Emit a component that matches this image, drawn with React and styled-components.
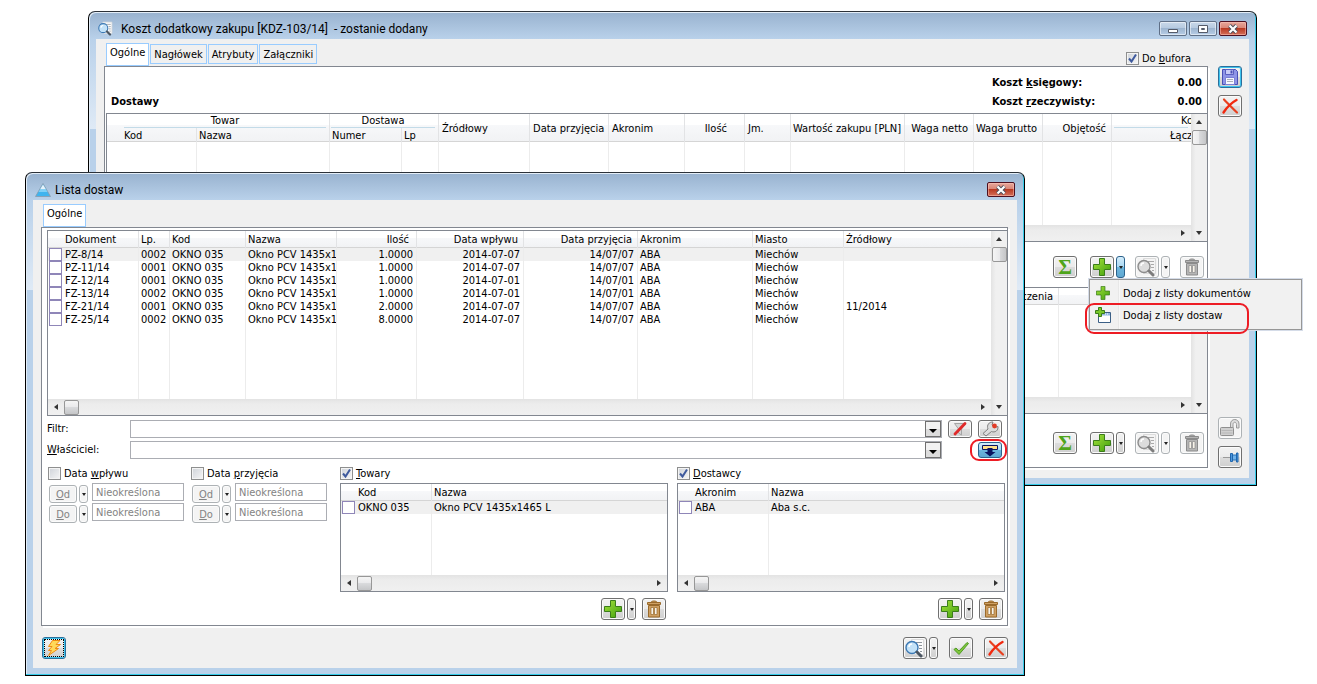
import React from 'react';
import styled, { createGlobalStyle, css } from 'styled-components';

const GlobalStyle = createGlobalStyle`
  * {
    box-sizing: border-box;
  }
  body {
    margin: 0;
    background: #fff;
    color: #000;
    font-family: "DejaVu Sans Condensed", "DejaVu Sans", sans-serif;
    font-size: 11px;
    line-height: 13px;
  }
  button, input, select {
    font: inherit;
    color: inherit;
    margin: 0;
    padding: 0;
  }
`;

const Desktop = styled.main`
  position: relative;
  min-height: 100vh;
`;

/* ---------- window frame ---------- */

const Frame = styled.section`
  position: absolute;
  top: ${p => p.$top}px;
  left: ${p => p.$left}px;
  right: ${p => p.$right}px;
  padding: 0 7px 7px;
  border: 1px solid #000;
  border-top-color: #2b3138;
  border-radius: 7px 7px 0 0;
  background: linear-gradient(#98b2cf 0, #b9d1ea 27px, #dfeaf6 117px, #b9d1ea 117px);
  box-shadow: inset -1px -1px 0 #35cbe8, inset 1px 1px 0 #e3edf7;
`;

const TitleBar = styled.header`
  display: flex;
  align-items: flex-end;
  gap: 2px;
  height: 27px;
  padding: 0 2px 3px;
`;

const Title = styled.h1`
  flex: 1;
  margin: 0;
  padding-left: ${p => p.$indent}px;
  font-family: Roboto, "Open Sans", sans-serif;
  font-size: 12px;
  font-weight: 400;
  line-height: 14px;
  white-space: pre;
`;

const CaptionButton = styled.button`
  display: flex;
  align-items: center;
  justify-content: center;
  width: 28px;
  height: 15px;
  border: 1px solid #5f6f86;
  border-radius: 2px;
  background: linear-gradient(#c9d8e9 0, #b5c9df 50%, #9db5d0 50%, #b7cde6 100%);
  box-shadow: inset 0 0 0 1px rgba(255, 255, 255, 0.5);
  ${p => p.$close && css`
    border-color: #4d1020;
    background: linear-gradient(#e6a79b 0, #d98374 50%, #b93a23 50%, #d4705a 100%);
    box-shadow: inset 0 0 0 1px rgba(255, 200, 190, 0.5);
  `}
`;

const Client = styled.div`
  padding: ${p => p.$pad};
  background: #f0f0f0;
`;

const ClientColumns = styled(Client)`
  display: grid;
  grid-template-columns: minmax(0, 1fr) 24px;
  column-gap: 10px;
`;

/* ---------- tabs and panels ---------- */

const TabRow = styled.nav`
  display: flex;
  align-items: center;
  gap: 1px;
  height: 24px;
  padding: 0 17px 0 2px;
`;

const Tab = styled.button`
  height: ${p => (p.$active ? 23 : 20)}px;
  padding: ${p => (p.$active ? '0 3px 4px' : '0 3px')};
  border: 1px solid #99ccff;
  background: ${p => (p.$active ? '#fff' : '#f0f0f0')};
`;

const Panel = styled.div`
  border: 1px solid #828790;
  background: #fff;
  box-shadow: 2px 2px 0 #fff;
`;

const Summary = styled.div`
  display: flex;
  align-items: flex-end;
  justify-content: space-between;
  padding: 6px 5px 2px 6px;
  font-weight: 700;
  line-height: 19px;
`;

const Heading = styled.h2`
  margin: 0;
  font-size: 11px;
`;

const Totals = styled.dl`
  display: grid;
  grid-template-columns: 1fr auto;
  width: 210px;
  margin: 0;
  dd {
    margin: 0;
  }
`;

/* ---------- buttons ---------- */

const ToolBar = styled.div`
  display: flex;
  justify-content: flex-end;
  gap: ${p => p.$gap}px;
  padding: ${p => p.$pad};
`;

const Split = styled.div`
  position: relative;
  display: flex;
  gap: 2px;
`;

const Tool = styled.button`
  display: flex;
  align-items: center;
  justify-content: center;
  flex: none;
  width: 24px;
  height: ${p => p.$height || 22}px;
  border: 1px solid #707070;
  border-radius: 3px;
  background: linear-gradient(#f2f2f2 0, #ebebeb 50%, #dddddd 50%, #cfcfcf 100%);
  box-shadow: inset 0 0 0 1px #fbfbfb;
  ${p => p.$focus && css`
    border-color: #2c6f9b;
    box-shadow: inset 0 0 0 1px #3cc3ee;
  `}
  ${p => p.$pressed && css`
    border-color: #2c628b;
    background: linear-gradient(#d4edfb 0, #a9d8f3 50%, #6db6dd 50%, #5fa8d2 100%);
    box-shadow: none;
  `}
  &:disabled {
    border-color: #adb2b5;
    background: #f4f4f4;
  }
`;

const SumTool = styled(Tool)`
  margin-right: 3px;
  color: #4fa51b;
  font: 700 21px/20px "Liberation Serif", serif;
`;

const Drop = styled(Tool)`
  width: 9px;
  &::after {
    content: '';
    border: 2px solid transparent;
    border-top: 3px solid #222;
    border-bottom: 0;
  }
`;

const TextTool = styled(Tool)`
  width: 28px;
  height: 18px;
  &:disabled {
    color: #838383;
  }
`;

const SmallDrop = styled(Drop)`
  height: 18px;
`;

const SideBar = styled.aside`
  display: flex;
  flex-direction: column;
  gap: 7px;
  padding-top: 24px;
`;

const Spacer = styled.div`
  flex: 1;
`;

/* ---------- menu ---------- */

const Menu = styled.div`
  position: absolute;
  z-index: 2;
  top: 23px;
  left: -1px;
  width: 213px;
  padding: 2px 1px 3px;
  border: 1px solid #979797;
  background: linear-gradient(90deg, transparent 28px, #e0e0e0 28px, #fff 30px, transparent 30px), #f1f1f1;
  box-shadow: 0 0 0 1px #d5dce8;
`;

const MenuItem = styled.button`
  display: grid;
  grid-template-columns: 24px 1fr;
  align-items: center;
  column-gap: 8px;
  width: 100%;
  height: 22px;
  border: 0;
  background: none;
  text-align: left;
  svg {
    justify-self: center;
  }
`;

const Marker = styled.span`
  position: absolute;
  z-index: 3;
  top: ${p => p.$top}px;
  left: ${p => p.$left}px;
  width: ${p => p.$width}px;
  height: ${p => p.$height}px;
  border: 2px solid #ed1c24;
  border-radius: 9px;
  pointer-events: none;
`;

/* ---------- lists ---------- */

const ListBox = styled.div`
  display: grid;
  grid-template-columns: minmax(0, 1fr) auto;
  margin: ${p => p.$margin || 0};
  border: 1px solid #828790;
  border-right-width: ${p => (p.$flush ? 0 : 1)}px;
  background: #fff;
`;

const Table = styled.table`
  width: 100%;
  height: ${p => p.$height}px;
  table-layout: fixed;
  border-collapse: separate;
  border-spacing: 0;
  thead {
    background:
      linear-gradient(to top, #d5d5d5 1px, transparent 1px),
      linear-gradient(#fff 0, #fff 40%, #f7f8fa 40%, #f1f2f4 100%);
  }
`;

const Th = styled.th`
  height: ${p => p.$height || 17}px;
  padding: 0 ${p => p.$right || 7}px 0 ${p => p.$left || 2}px;
  border-right: 1px solid #e2e3e5;
  font-weight: 400;
  text-align: ${p => p.$align || 'left'};
  white-space: nowrap;
  overflow: hidden;
  &:last-child {
    border-right: 0;
  }
`;

const GroupTh = styled(Th)`
  padding: 0 3px 0 ${p => p.$left || 1}px;
  div {
    height: 14px;
    padding-left: ${p => p.$indent || 0}px;
    border-bottom: 1px solid #c3dbe8;
  }
`;

const Td = styled.td`
  height: 13px;
  padding: 0 3px 0 2px;
  border-right: 1px solid #ececec;
  text-align: ${p => p.$align || 'left'};
  white-space: nowrap;
  overflow: hidden;
  &:last-child {
    border-right: 0;
  }
`;

const Row = styled.tr`
  background: ${p => (p.$current ? '#f0f0f0' : 'transparent')};
`;

const Filler = styled(Td)`
  height: auto;
`;

const CheckCell = styled(Td)`
  padding: 0 0 0 1px;
  label {
    display: flex;
    gap: 3px;
  }
`;

const RowCheck = styled.input`
  appearance: none;
  flex: none;
  width: 13px;
  height: 13px;
  border: 1px solid #8f86b8;
  background: #fff;
`;

const VScroll = styled.div`
  display: flex;
  flex-direction: column;
  align-items: center;
  grid-row: span 2;
  width: 16px;
  background: linear-gradient(90deg, #e3e3e3, #f0f0f0 30%);
`;

const HScroll = styled.div`
  display: flex;
  align-items: center;
  height: 16px;
  background: linear-gradient(#e3e3e3, #ececec 30%, #f0f0f0);
`;

const ScrollArrow = styled.button`
  display: flex;
  align-items: center;
  justify-content: center;
  width: 16px;
  height: 16px;
  border: 0;
  background: none;
`;

const Thumb = styled.div`
  width: 15px;
  height: 15px;
  border: 1px solid #979797;
  border-radius: 2px;
  background: linear-gradient(${p => p.$angle || 180}deg, #f5f5f5 0, #e9e9eb 50%, #d9dadc 50%, #c5c6c8 100%);
`;

/* ---------- form ---------- */

const FilterGrid = styled.div`
  display: grid;
  grid-template-columns: 77px 1fr 24px 24px;
  gap: 3px 6px;
  align-items: center;
  padding: 4px 5px 0;
  label {
    line-height: 16px;
  }
`;

const Combo = styled.div`
  display: grid;
  height: 18px;
  border: 1px solid #abadb3;
  select, span {
    grid-area: 1 / 1;
  }
  select {
    appearance: none;
    width: 100%;
    height: 16px;
    padding-left: 3px;
    border: 0;
    background: #fff;
  }
`;

const ComboArrow = styled.span`
  display: flex;
  align-items: flex-end;
  justify-content: center;
  justify-self: end;
  width: 16px;
  height: 16px;
  padding-bottom: 3px;
  border: 1px solid #707070;
  background: linear-gradient(#f2f2f2 50%, #dcdcdc 50%);
  pointer-events: none;
`;

const MarkedTool = styled.div`
  position: relative;
  grid-column: 4;
`;

const Criteria = styled.div`
  display: grid;
  grid-template-columns: 134px 140px minmax(0, 1fr) minmax(0, 1fr);
  column-gap: 9px;
  padding: 6px 2px 5px 6px;
`;

const Field = styled.label`
  display: flex;
  align-items: center;
  align-self: ${p => p.$align || 'auto'};
  gap: 3px;
  height: 16px;
  margin-bottom: ${p => p.$below || 0}px;
  margin-left: ${p => (p.$push ? 'auto' : 0)};
`;

const Box = styled.span`
  display: grid;
  width: 13px;
  height: 13px;
  input, svg {
    grid-area: 1 / 1;
  }
  input {
    appearance: none;
    width: 13px;
    height: 13px;
    border: 1px solid #8e8f8f;
    background: linear-gradient(135deg, #cfd3d9, #f6f6f6);
    box-shadow: inset 0 0 0 1px #f4f4f4;
  }
  svg {
    visibility: hidden;
    pointer-events: none;
  }
  input:checked + svg {
    visibility: visible;
  }
`;

const Dates = styled.div`
  display: flex;
  gap: 4px;
  padding-left: 1px;
`;

const DateButtons = styled.div`
  display: grid;
  gap: 2px;
  padding-top: 2px;
`;

const DateInputs = styled.div`
  display: grid;
  align-content: start;
  gap: 2px;
`;

const DateInput = styled.input`
  width: 92px;
  height: 18px;
  padding: 0 3px;
  border: 1px solid #abadb3;
  background: #fff;
  &:disabled {
    color: #838383;
  }
`;

const Footer = styled.footer`
  display: flex;
  gap: 11px;
  padding: 11px 0 0 1px;
`;

const DottedFocus = styled.span`
  display: flex;
  align-items: center;
  justify-content: center;
  width: 20px;
  height: 18px;
  border: 1px dotted #000;
`;

/* ---------- icons ---------- */

const PlusIcon = ({ size = 18 }) => (
  <svg width={size} height={size} viewBox="0 0 18 18">
    <defs>
      <linearGradient id="leaf" x1="0" y1="0" x2="1" y2="1">
        <stop offset="0" stopColor="#a5e23c" />
        <stop offset="1" stopColor="#3f9f0c" />
      </linearGradient>
    </defs>
    <path d="M6.5.5h5v6h6v5h-6v6h-5v-6h-6v-5h6z" fill="url(#leaf)" stroke="#3b7d1a" />
  </svg>
);

const LensIcon = ({ muted, size = 20 }) => (
  <svg width={size} height={size} viewBox="0 0 20 20">
    <path d="M6.500 1.500h12v15h-12z" fill={muted ? '#f4f4f4' : '#fdfdfd'} stroke="#dcdcdc" />
    <path d="M11 4.500h6M14 7.500h3M14 10.500h3M15 13.500h2" stroke={muted ? '#aaa' : '#8d949b'} />
    <circle cx="7" cy="9.500" r="6" fill={muted ? '#dcdcdc' : '#c3e2f8'} stroke={muted ? '#8c8c8c' : '#3c79b4'} strokeWidth="1.400" />
    <path d="M4 9a3 3 0 0 1 3-3" fill="none" stroke="#fff" strokeWidth="1.400" />
    <path d="M12 14l4 4" stroke={muted ? '#7d7d7d' : '#4c5763'} strokeWidth="3" strokeLinecap="round" />
  </svg>
);

const TrashIcon = ({ muted }) => {
  const dark = muted ? '#8b8b8b' : '#9a6a2b';
  const body = muted ? '#b5b5b5' : '#cfa063';
  return (
    <svg width="18" height="18" viewBox="0 0 18 18">
      <path d="M6 2.500c0-2 6-2 6 0" fill={body} stroke={dark} />
      <path d="M2.500 2.500h13v2h-13z" fill={body} stroke={dark} />
      <path d="M3.500 5.500h11v11.500h-11z" fill={body} stroke={dark} />
      <path d="M6 7.500h2.500v7H6zM9.500 7.500H12v7H9.500z" fill="#f7f3ea" stroke={dark} strokeWidth=".7" />
    </svg>
  );
};

const CrossIcon = () => (
  <svg width="18" height="18" viewBox="0 0 18 18">
    <path d="M3 2.500c4 4 8 8.500 13 13" stroke="#e8401f" strokeWidth="2.200" strokeLinecap="round" fill="none" />
    <path d="M15.500 3C10 6 6 10 2.500 15.500" stroke="#f1290f" strokeWidth="2.400" strokeLinecap="round" fill="none" />
  </svg>
);

const TickIcon = () => (
  <svg width="18" height="18" viewBox="0 0 18 18">
    <path d="M2 10.500l2-1.500 3 3L15 3.500l1.500 1L7 15.500z" fill="#7fc63b" stroke="#4f9a26" strokeLinejoin="round" />
  </svg>
);

const DiskIcon = () => (
  <svg width="18" height="18" viewBox="0 0 18 18">
    <path d="M1.500 1.500h13l2 2v13h-15z" fill="#8f94e6" stroke="#4a4fb5" />
    <path d="M4.500 1.500h8v5h-8z" fill="#c9cbf7" stroke="#5a5fc0" />
    <path d="M9.500 2.500h2v3h-2z" fill="#4a4fb5" />
    <path d="M4.500 9.500h9v7h-9z" fill="#f6f7ff" stroke="#7b80d6" />
    <path d="M6 11.500h6M6 13.500h6" stroke="#a9adb8" />
  </svg>
);

const LockIcon = () => (
  <svg width="22" height="20" viewBox="0 0 22 20">
    <path d="M11.500 10V6c0-6 8.500-6 8.500 0v4h-2.500V6.500c0-3-3.500-3-3.500 0V10z" fill="#dedede" stroke="#999" />
    <rect x="1.500" y="9.500" width="13" height="8" rx="1" fill="#cfcfcf" stroke="#8f8f8f" />
    <path d="M2.500 12.500h11M2.500 15h11" stroke="#b7b7b7" />
  </svg>
);

const PinIcon = () => (
  <svg width="20" height="16" viewBox="0 0 20 16">
    <path d="M3 8.500h8" stroke="#9a9a9a" />
    <path d="M12.500 6h4v5h-4z" fill="#6fb2ea" stroke="#2a72b8" />
    <path d="M10.500 4.500h2v8h-2z" fill="#4d97dd" stroke="#1f66ae" />
    <path d="M16.500 4h1.500v9h-1.500z" fill="#4d97dd" stroke="#1f66ae" />
  </svg>
);

const BoltIcon = () => (
  <svg width="16" height="16" viewBox="0 0 16 16">
    <path d="M6.500.5L14 .5 10 4.500 14.500 4.500 9 8.500 12.500 8.500 2.500 15.500 5.500 10.500 2.500 10.500 6 6.500 2.500 6.500z" fill="#ffd95a" stroke="#f08a10" strokeLinejoin="round" />
  </svg>
);

const NoFilterIcon = () => (
  <svg width="18" height="16" viewBox="0 0 18 16">
    <path d="M3.500 2.500h11L10.500 8v6l-3-2V8z" fill="#d6d6d6" stroke="#a5a5a5" />
    <path d="M14 2.500L4 13" stroke="#e02a2a" strokeWidth="2.800" strokeLinecap="round" />
  </svg>
);

const WrenchIcon = () => (
  <svg width="18" height="16" viewBox="0 0 18 16">
    <path d="M2 12.500L7 8C5.500 4 8 .8 12 1L11 4l2.500 2.500 3.500-1C17.500 9.500 14 12 10.500 10.500L5 15z" fill="#dcdcdc" stroke="#7f7f7f" strokeLinejoin="round" />
    <circle cx="13.500" cy="5" r="2.400" fill="#e23b26" />
  </svg>
);

const ApplyIcon = () => (
  <svg width="18" height="14" viewBox="0 0 18 14">
    <path d="M1.500 2.500h15v4h-15z" fill="#ffe08a" stroke="#0b1460" />
    <path d="M6.500 5h5v4h3L9 13.500 3.500 9h3z" fill="#0b1460" />
  </svg>
);

const AddWindowIcon = () => (
  <svg width="16" height="16" viewBox="0 0 16 16">
    <path d="M3.500 5.500h12v10h-12z" fill="#fff" stroke="#3b5f86" />
    <path d="M4 6h11v2.500H4z" fill="#8fb6e0" />
    <path d="M10 7h1M12 7h1" stroke="#fff" />
    <path d="M3.500.5h3v3h3v3h-3v3h-3v-3h-3v-3h3z" fill="#79c72a" stroke="#3b7d1a" />
  </svg>
);

const PeakIcon = () => (
  <svg width="16" height="14" viewBox="0 0 16 14">
    <path d="M8 .5L15.500 13.500H.5z" fill="#3fb4ef" stroke="#8a9bab" strokeWidth=".8" />
    <path d="M8 1.500l3 5H5z" fill="#e6f2fa" />
    <path d="M5 6.500h6l1.500 2.500h-9z" fill="#7fd0f7" />
  </svg>
);

const CheckMark = () => (
  <svg width="13" height="13" viewBox="0 0 13 13">
    <path d="M3 6.500l2.500 3L10 2.500" fill="none" stroke="#3f5a9d" strokeWidth="2" />
  </svg>
);

const CloseGlyph = () => (
  <svg width="12" height="10" viewBox="0 0 12 10">
    <path d="M2.500 1.500l7 7M9.500 1.500l-7 7" stroke="#4b4f5c" strokeWidth="4" />
    <path d="M2.500 1.500l7 7M9.500 1.500l-7 7" stroke="#fff" strokeWidth="2.200" />
  </svg>
);

const paths = {
  up: 'M1 6l3-4 3 4z',
  down: 'M1 2h6L4 6z',
  left: 'M6 1v6L2 4z',
  right: 'M2 1v6l4-3z',
};

const Arrow = ({ to }) => (
  <svg width="8" height="8" viewBox="0 0 8 8">
    <path d={paths[to]} fill="#333" />
  </svg>
);

const ComboGlyph = () => (
  <svg width="8" height="4" viewBox="0 0 8 4">
    <path d="M0 0h8L4 4z" fill="#000" />
  </svg>
);

/* ---------- composed parts ---------- */

const labels = {
  up: 'W górę',
  down: 'W dół',
  left: 'W lewo',
  right: 'W prawo',
};

const ScrollButton = ({ to }) => (
  <ScrollArrow aria-label={labels[to]}><Arrow to={to} /></ScrollArrow>
);

const VerticalBar = () => (
  <VScroll>
    <ScrollButton to="up" />
    <Thumb $angle={90} />
    <Spacer />
    <ScrollButton to="down" />
  </VScroll>
);

const HorizontalBar = () => (
  <HScroll>
    <ScrollButton to="left" />
    <Thumb />
    <Spacer />
    <ScrollButton to="right" />
  </HScroll>
);

const Columns = ({ widths }) => (
  <colgroup>
    {widths.map((w, i) => <col key={i} width={w} />)}
    <col />
  </colgroup>
);

// empty row that carries the column lines down to the scroll bar
const FillerRow = ({ count }) => (
  <tr>{Array.from({ length: count }, (_, i) => <Filler key={i} />)}</tr>
);

const CheckField = ({ children, checked, ...rest }) => (
  <Field {...rest}>
    <Box>
      <input type="checkbox" defaultChecked={checked} />
      <CheckMark />
    </Box>
    <span>{children}</span>
  </Field>
);

const PickList = ({ heads, row }) => (
  <ListBox>
    <Table $height={91}>
      <Columns widths={[91]} />
      <thead>
        <tr>
          <Th $left={17}>{heads[0]}</Th>
          <Th>{heads[1]}</Th>
        </tr>
      </thead>
      <tbody>
        <Row $current>
          <CheckCell><label><RowCheck type="checkbox" />{row[0]}</label></CheckCell>
          <Td>{row[1]}</Td>
        </Row>
        <FillerRow count={2} />
      </tbody>
    </Table>
    <Spacer />
    <HorizontalBar />
  </ListBox>
);

const DateGroup = ({ name, children }) => (
  <div>
    <CheckField $below={2}>{children}</CheckField>
    <Dates>
      <DateButtons>
        <Split>
          <TextTool disabled><u>O</u>d</TextTool>
          <SmallDrop disabled aria-label="Wybierz datę od" />
        </Split>
        <Split>
          <TextTool disabled><u>D</u>o</TextTool>
          <SmallDrop disabled aria-label="Wybierz datę do" />
        </Split>
      </DateButtons>
      <DateInputs>
        <DateInput disabled defaultValue="Nieokreślona" aria-label={`${name} od`} />
        <DateInput disabled defaultValue="Nieokreślona" aria-label={`${name} do`} />
      </DateInputs>
    </Dates>
  </div>
);

const PickTools = () => (
  <ToolBar $gap={6} $pad="6px 2px 0">
    <Split>
      <Tool aria-label="Dodaj"><PlusIcon /></Tool>
      <Drop aria-label="Więcej opcji dodawania" />
    </Split>
    <Tool aria-label="Usuń"><TrashIcon /></Tool>
  </ToolBar>
);

const CostTools = ({ pad, open }) => (
  <ToolBar $gap={10} $pad={pad}>
    <SumTool aria-label="Suma">Σ</SumTool>
    <Split>
      <Tool aria-label="Dodaj"><PlusIcon /></Tool>
      <Drop $pressed={open} aria-label="Więcej opcji dodawania" />
      {open && (
        <Menu>
          <MenuItem><PlusIcon size={14} />Dodaj z listy dokumentów</MenuItem>
          <MenuItem><AddWindowIcon />Dodaj z listy dostaw</MenuItem>
          <Marker $top={23} $left={-5} $width={164} $height={31} />
        </Menu>
      )}
    </Split>
    <Split>
      <Tool disabled aria-label="Podgląd"><LensIcon muted /></Tool>
      <Drop disabled aria-label="Więcej opcji podglądu" />
    </Split>
    <Tool disabled aria-label="Usuń"><TrashIcon muted /></Tool>
  </ToolBar>
);

/* ---------- windows ---------- */

const deliveryCols = [90, 133, 72, 37, 91, 79, 76, 60, 46, 114, 69, 69, 69];

const CostWindow = () => (
  <Frame $top={11} $left={88} $right={60}>
    <TitleBar>
      <LensIcon size={15} />
      <Title $indent={6}>Koszt dodatkowy zakupu [KDZ-103/14]  - zostanie dodany</Title>
      <CaptionButton aria-label="Minimalizuj">
        <svg width="12" height="10"><path d="M1.500 5.500h9v3h-9z" fill="#fff" stroke="#555b69" /></svg>
      </CaptionButton>
      <CaptionButton aria-label="Maksymalizuj">
        <svg width="12" height="10"><path d="M1.500 1.500h9v7h-9z" fill="#fff" stroke="#555b69" /><path d="M4.500 4.500h3v1h-3z" fill="#fff" stroke="#555b69" /></svg>
      </CaptionButton>
      <CaptionButton $close aria-label="Zamknij"><CloseGlyph /></CaptionButton>
    </TitleBar>
    <ClientColumns $pad="3px 7px 10px 8px">
      <div>
        <TabRow>
          <Tab $active>Ogólne</Tab>
          <Tab>Nagłówek</Tab>
          <Tab>Atrybuty</Tab>
          <Tab>Załączniki</Tab>
          <CheckField checked $push $align="flex-end">Do <u>b</u>ufora</CheckField>
        </TabRow>
        <Panel>
          <Summary>
            <Heading>Dostawy</Heading>
            <Totals>
              <dt>Koszt <u>k</u>sięgowy:</dt>
              <dd>0.00</dd>
              <dt>Koszt <u>r</u>zeczywisty:</dt>
              <dd>0.00</dd>
            </Totals>
          </Summary>
          <ListBox $flush $margin="0 0 0 1px">
            <Table $height={111}>
              <Columns widths={deliveryCols} />
              <thead>
                <tr>
                  <GroupTh colSpan={2} $height={14} $align="center" $left={17}><div>Towar</div></GroupTh>
                  <GroupTh colSpan={2} $height={14} $align="center"><div>Dostawa</div></GroupTh>
                  <Th rowSpan={2} $left={3}>Źródłowy</Th>
                  <Th rowSpan={2} $left={3}>Data przyjęcia</Th>
                  <Th rowSpan={2} $left={3}>Akronim</Th>
                  <Th rowSpan={2} $align="right" $right={17}>Ilość</Th>
                  <Th rowSpan={2} $left={3}>Jm.</Th>
                  <Th rowSpan={2} $align="right" $right={5}>Wartość zakupu [PLN]</Th>
                  <Th rowSpan={2} $align="right" $right={5}>Waga netto</Th>
                  <Th rowSpan={2} $align="right" $right={5}>Waga brutto</Th>
                  <Th rowSpan={2} $align="right" $right={5}>Objętość</Th>
                  <GroupTh $height={14} $left={2} $indent={67}><div>Koszt</div></GroupTh>
                </tr>
                <tr>
                  <Th $height={14} $left={17}>Kod</Th>
                  <Th $height={14}>Nazwa</Th>
                  <Th $height={14}>Numer</Th>
                  <Th $height={14}>Lp</Th>
                  <Th $height={14} $left={58}>Łącznie</Th>
                </tr>
              </thead>
              <tbody>
                <FillerRow count={14} />
              </tbody>
            </Table>
            <VerticalBar />
            <HorizontalBar />
          </ListBox>
          <CostTools pad="14px 3px 9px" open />
          <ListBox $flush $margin="0 0 0 1px">
            <Table $height={109}>
              <Columns widths={[952]} />
              <thead>
                <tr>
                  <Th $align="right" $right={5}>Data rozliczenia</Th>
                  <Th />
                </tr>
              </thead>
              <tbody>
                <FillerRow count={2} />
              </tbody>
            </Table>
            <VerticalBar />
            <HorizontalBar />
          </ListBox>
          <CostTools pad="18px 3px 13px" />
        </Panel>
      </div>
      <SideBar>
        <Tool $focus aria-label="Zapisz"><DiskIcon /></Tool>
        <Tool aria-label="Anuluj"><CrossIcon /></Tool>
        <Spacer />
        <Tool disabled aria-label="Odblokuj"><LockIcon /></Tool>
        <Tool aria-label="Przypnij"><PinIcon /></Tool>
      </SideBar>
    </ClientColumns>
  </Frame>
);

const docs = [
  ['PZ-8/14', '0002', 'OKNO 035', 'Okno PCV 1435x1465 L', '1.0000', '2014-07-07', '14/07/07', 'ABA', 'Miechów', ''],
  ['PZ-11/14', '0001', 'OKNO 035', 'Okno PCV 1435x1465 L', '1.0000', '2014-07-07', '14/07/07', 'ABA', 'Miechów', ''],
  ['FZ-12/14', '0001', 'OKNO 035', 'Okno PCV 1435x1465 L', '1.0000', '2014-07-01', '14/07/01', 'ABA', 'Miechów', ''],
  ['FZ-13/14', '0002', 'OKNO 035', 'Okno PCV 1435x1465 L', '1.0000', '2014-07-01', '14/07/01', 'ABA', 'Miechów', ''],
  ['FZ-21/14', '0001', 'OKNO 035', 'Okno PCV 1435x1465 L', '2.0000', '2014-07-07', '14/07/07', 'ABA', 'Miechów', '11/2014'],
  ['FZ-25/14', '0002', 'OKNO 035', 'Okno PCV 1435x1465 L', '8.0000', '2014-07-07', '14/07/07', 'ABA', 'Miechów', ''],
];

const rightAligned = [1, 4, 5, 6];

const DeliveryWindow = () => (
  <Frame $top={172} $left={25} $right={292}>
    <TitleBar>
      <PeakIcon />
      <Title $indent={2}>Lista dostaw</Title>
      <CaptionButton $close aria-label="Zamknij"><CloseGlyph /></CaptionButton>
    </TitleBar>
    <Client $pad="3px 9px 9px 8px">
      <TabRow>
        <Tab $active>Ogólne</Tab>
      </TabRow>
      <Panel>
        <ListBox $flush $margin="2px 0 0 5px">
          <Table $height={168}>
            <Columns widths={[91, 31, 76, 91, 80, 107, 114, 115, 91]} />
            <thead>
              <tr>
                <Th $left={17}>Dokument</Th>
                <Th>Lp.</Th>
                <Th>Kod</Th>
                <Th>Nazwa</Th>
                <Th $align="right">Ilość</Th>
                <Th $align="right" $right={5}>Data wpływu</Th>
                <Th $align="right" $right={5}>Data przyjęcia</Th>
                <Th>Akronim</Th>
                <Th>Miasto</Th>
                <Th>Źródłowy</Th>
              </tr>
            </thead>
            <tbody>
              {docs.map(([doc, ...rest], n) => (
                <Row key={doc} $current={n === 0}>
                  <CheckCell><label><RowCheck type="checkbox" />{doc}</label></CheckCell>
                  {rest.map((text, i) => (
                    <Td key={i} $align={rightAligned.includes(i + 1) ? 'right' : 'left'}>{text}</Td>
                  ))}
                </Row>
              ))}
              <FillerRow count={10} />
            </tbody>
          </Table>
          <VerticalBar />
          <HorizontalBar />
        </ListBox>
        <FilterGrid>
          <label htmlFor="filtr">Filtr:</label>
          <Combo>
            <select id="filtr" />
            <ComboArrow><ComboGlyph /></ComboArrow>
          </Combo>
          <Tool $height={18} aria-label="Wyczyść filtr"><NoFilterIcon /></Tool>
          <Tool $height={18} aria-label="Konstruktor filtra"><WrenchIcon /></Tool>
          <label htmlFor="wlasciciel"><u>W</u>łaściciel:</label>
          <Combo>
            <select id="wlasciciel" />
            <ComboArrow><ComboGlyph /></ComboArrow>
          </Combo>
          <MarkedTool>
            <Tool $height={16} $pressed aria-label="Zastosuj filtr"><ApplyIcon /></Tool>
            <Marker $top={-3} $left={-8} $width={37} $height={22} />
          </MarkedTool>
        </FilterGrid>
        <Criteria>
          <DateGroup name="Data wpływu">Data <u>w</u>pływu</DateGroup>
          <DateGroup name="Data przyjęcia">Data <u>p</u>rzyjęcia</DateGroup>
          <div>
            <CheckField checked $below={2}><u>T</u>owary</CheckField>
            <PickList heads={['Kod', 'Nazwa']} row={['OKNO 035', 'Okno PCV 1435x1465 L']} />
            <PickTools />
          </div>
          <div>
            <CheckField checked $below={2}><u>D</u>ostawcy</CheckField>
            <PickList heads={['Akronim', 'Nazwa']} row={['ABA', 'Aba s.c.']} />
            <PickTools />
          </div>
        </Criteria>
      </Panel>
      <Footer>
        <Tool $focus aria-label="Wykonaj"><DottedFocus><BoltIcon /></DottedFocus></Tool>
        <Spacer />
        <Split>
          <Tool aria-label="Podgląd"><LensIcon /></Tool>
          <Drop aria-label="Więcej opcji podglądu" />
        </Split>
        <Tool aria-label="Wybierz"><TickIcon /></Tool>
        <Tool aria-label="Zamknij listę"><CrossIcon /></Tool>
      </Footer>
    </Client>
  </Frame>
);

const App = () => {
  return (
    <Desktop>
      <GlobalStyle />
      <CostWindow />
      <DeliveryWindow />
    </Desktop>
  )
}

export default App
